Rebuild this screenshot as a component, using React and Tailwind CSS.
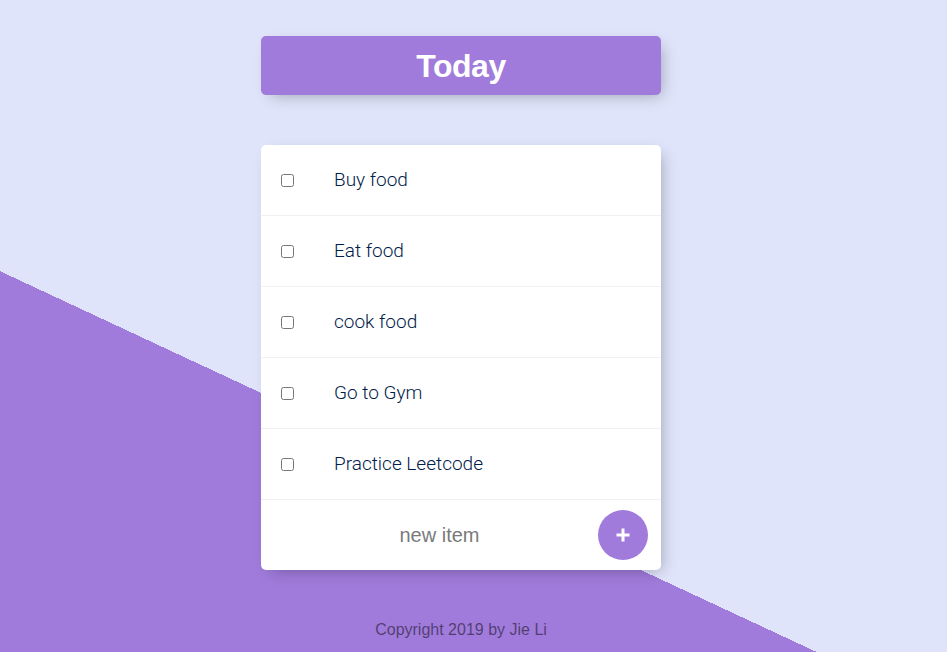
export default function App() {
  const items = ["Buy food", "Eat food", "cook food", "Go to Gym", "Practice Leetcode"];
  return (
    <div className="w-full h-[652px] overflow-hidden bg-[#DFE4FA] bg-[linear-gradient(25deg,#A07BDB_50%,#DFE4FA_50%)] bg-[length:100%_984px] bg-no-repeat">
      <div className="w-[922px] flex flex-col items-center pt-[36px]">
        <div className="w-[400px] h-[59px] rounded-[5px] bg-[#A07BDB] flex items-center justify-center shadow-[5px_5px_15px_-5px_rgba(0,0,0,0.3)]">
          <h1 className="text-white text-[32px] font-bold tracking-[-0.5px]" style={{ fontFamily: '"Liberation Sans", Arial, sans-serif' }}>
            Today
          </h1>
        </div>
        <div className="w-[400px] mt-[50px] bg-white rounded-[5px] shadow-[5px_5px_15px_-5px_rgba(0,0,0,0.3)]">
          {items.map((t) => (
            <div key={t} className="h-[71px] flex items-center border-b border-[#F1F1F1]">
              <input type="checkbox" className="m-5 w-[13px] h-[13px]" />
              <p className="px-5 pt-px text-[19px] font-light text-[#00204a]" style={{ fontFamily: 'Roboto, "Liberation Sans", sans-serif' }}>
                {t}
              </p>
            </div>
          ))}
          <div className="h-[70px] flex items-center pl-5">
            <div className="w-[313px] pl-1 text-center text-[20px] text-[#7a7a7a]" style={{ fontFamily: '"Liberation Sans", Arial, sans-serif' }}>
              new item
            </div>
            <button className="ml-1 w-[50px] h-[50px] rounded-full bg-[#A07BDB] text-white flex items-center justify-center">
              <svg width="16" height="16" viewBox="0 0 16 16">
                <path d="M8 1.5V14.5M1.5 8H14.5" stroke="white" strokeWidth="3" />
              </svg>
            </button>
          </div>
        </div>
        <footer className="mt-[48px] text-[16px] text-black/50" style={{ fontFamily: '"Liberation Sans", Arial, sans-serif' }}>
          Copyright 2019 by Jie Li
        </footer>
      </div>
    </div>
  );
}
